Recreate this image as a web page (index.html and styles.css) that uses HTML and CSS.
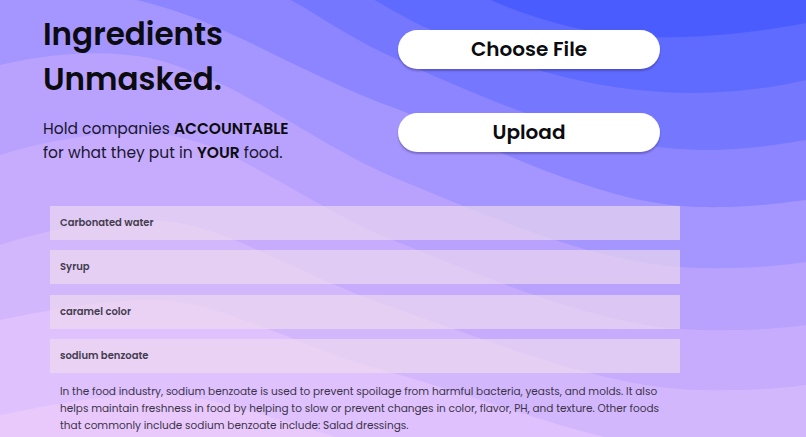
FILE: index.html
```html
<!DOCTYPE html>
<html lang="en">
<head>
<meta charset="utf-8">
<title>Ingredients Unmasked</title>
<link rel="stylesheet" href="styles.css">
</head>
<body>
<div class="backdrop" aria-hidden="true">
  <svg class="waves" viewBox="0 0 806 437" preserveAspectRatio="none" xmlns="http://www.w3.org/2000/svg">
    <rect x="0" y="0" width="806" height="437" fill="#e9c9fc"/>
    <path fill="#dfc1fd" d="M0,415 C40,407 100,395 150,394 C180,394 200,398 230,405 C300,425 340,440 400,455 L806,470 L806,-100 L0,-100 Z"/>
    <path fill="#d3b7fd" d="M0,320 C40,312 100,300 150,300 C180,300 200,305 230,315 C300,340 340,360 400,375 C520,410 610,448 700,452 C750,453 785,450 806,447 L806,-100 L0,-100 Z"/>
    <path fill="#c7acfe" d="M0,245 C40,232 100,218 150,220 C180,221 200,227 230,238 C300,268 340,290 400,310 C520,352 610,388 700,390 C750,391 785,388 806,385 L806,-100 L0,-100 Z"/>
    <path fill="#b9a2fe" d="M0,155 C40,143 100,130 150,133 C180,135 200,142 230,155 C300,190 340,220 400,243 C520,292 610,328 700,330 C750,331 785,328 806,325 L806,-100 L0,-100 Z"/>
    <path fill="#a596ff" d="M0,65 C40,55 100,48 150,58 C180,65 200,75 230,88 C300,125 340,155 400,180 C520,230 610,266 700,268 C750,269 785,265 806,262 L806,-100 L0,-100 Z"/>
    <path fill="#8c85ff" d="M0,-10 C70,-20 150,0 200,20 C270,50 330,85 400,110 C520,160 610,205 700,207 C750,208 780,203 806,200 L806,-100 L0,-100 Z"/>
    <path fill="#7577ff" d="M150,-70 C220,-45 260,-15 300,5 C340,30 370,48 410,65 C520,115 610,148 700,150 C750,150 780,144 806,140 L806,-100 L150,-100 Z"/>
    <path fill="#5f6bff" d="M300,-50 C350,-15 380,5 420,25 C520,70 600,92 690,93 C740,93 780,86 806,80 L806,-100 L300,-100 Z"/>
    <path fill="#4b5cff" d="M380,-60 C450,-15 540,32 640,37 C700,39 760,32 806,23 L806,-100 L380,-100 Z"/>
  </svg>
</div>
<main class="page">
  <section class="hero">
    <div class="intro">
      <h1 class="title">Ingredients<br>Unmasked.</h1>
      <p class="tagline">Hold companies <strong>ACCOUNTABLE</strong><br>for what they put in <strong>YOUR</strong> food.</p>
    </div>
    <div class="actions">
      <button class="pill" type="button">Choose File</button>
      <button class="pill" type="button">Upload</button>
    </div>
  </section>
  <ul class="ingredients">
    <li class="ingredient">Carbonated water</li>
    <li class="ingredient">Syrup</li>
    <li class="ingredient">caramel color</li>
    <li class="ingredient">sodium benzoate</li>
  </ul>
  <p class="info">In the food industry, sodium benzoate is used to prevent spoilage from harmful bacteria, yeasts, and molds. It also helps maintain freshness in food by helping to slow or prevent changes in color, flavor, PH, and texture. Other foods that commonly include sodium benzoate include: Salad dressings.</p>
</main>
</body>
</html>
```

FILE: styles.css
```css
html, body {
  margin: 0;
  padding: 0;
  width: 806px;
  height: 437px;
  overflow: hidden;
}

body {
  font-family: "Poppins", "Open Sans", "Noto Sans", sans-serif;
  color: #111;
  position: relative;
}

.backdrop {
  position: absolute;
  inset: 0;
  z-index: 0;
}

.waves {
  display: block;
  width: 100%;
  height: 100%;
}

.page {
  position: relative;
  z-index: 1;
}

.hero {
  display: flex;
  padding: 12px 0 0 43px;
}

.intro {
  width: 355px;
}

.title {
  margin: 0;
  font-size: 31px;
  line-height: 45px;
  font-weight: 600;
  color: #0b0b10;
}

.tagline {
  margin: 15px 0 0;
  font-size: 15.5px;
  line-height: 24px;
  color: #1b1730;
}

.tagline strong {
  font-weight: 600;
  color: #0b0b10;
}

.actions {
  display: flex;
  flex-direction: column;
  gap: 44px;
  padding-top: 18px;
}

.pill {
  width: 262px;
  height: 39px;
  border: none;
  border-radius: 20px;
  background: #fff;
  font-family: inherit;
  font-size: 20px;
  font-weight: 600;
  color: #0b0b10;
  box-shadow: 0 2px 2px rgba(40, 30, 90, 0.35);
  padding: 0 0 1px;
  cursor: pointer;
}

.ingredients {
  list-style: none;
  margin: 41px 0 0 50px;
  padding: 0;
  width: 630px;
  display: flex;
  flex-direction: column;
  gap: 10.33px;
}

.ingredient {
  height: 34px;
  display: flex;
  align-items: center;
  padding-left: 10px;
  background: rgba(238, 220, 238, 0.65);
  font-size: 10px;
  font-weight: 600;
  color: #443d4f;
}

.info {
  margin: 10px 0 0 60px;
  width: 610px;
  font-size: 10.5px;
  line-height: 17px;
  color: #3b3448;
}
```
